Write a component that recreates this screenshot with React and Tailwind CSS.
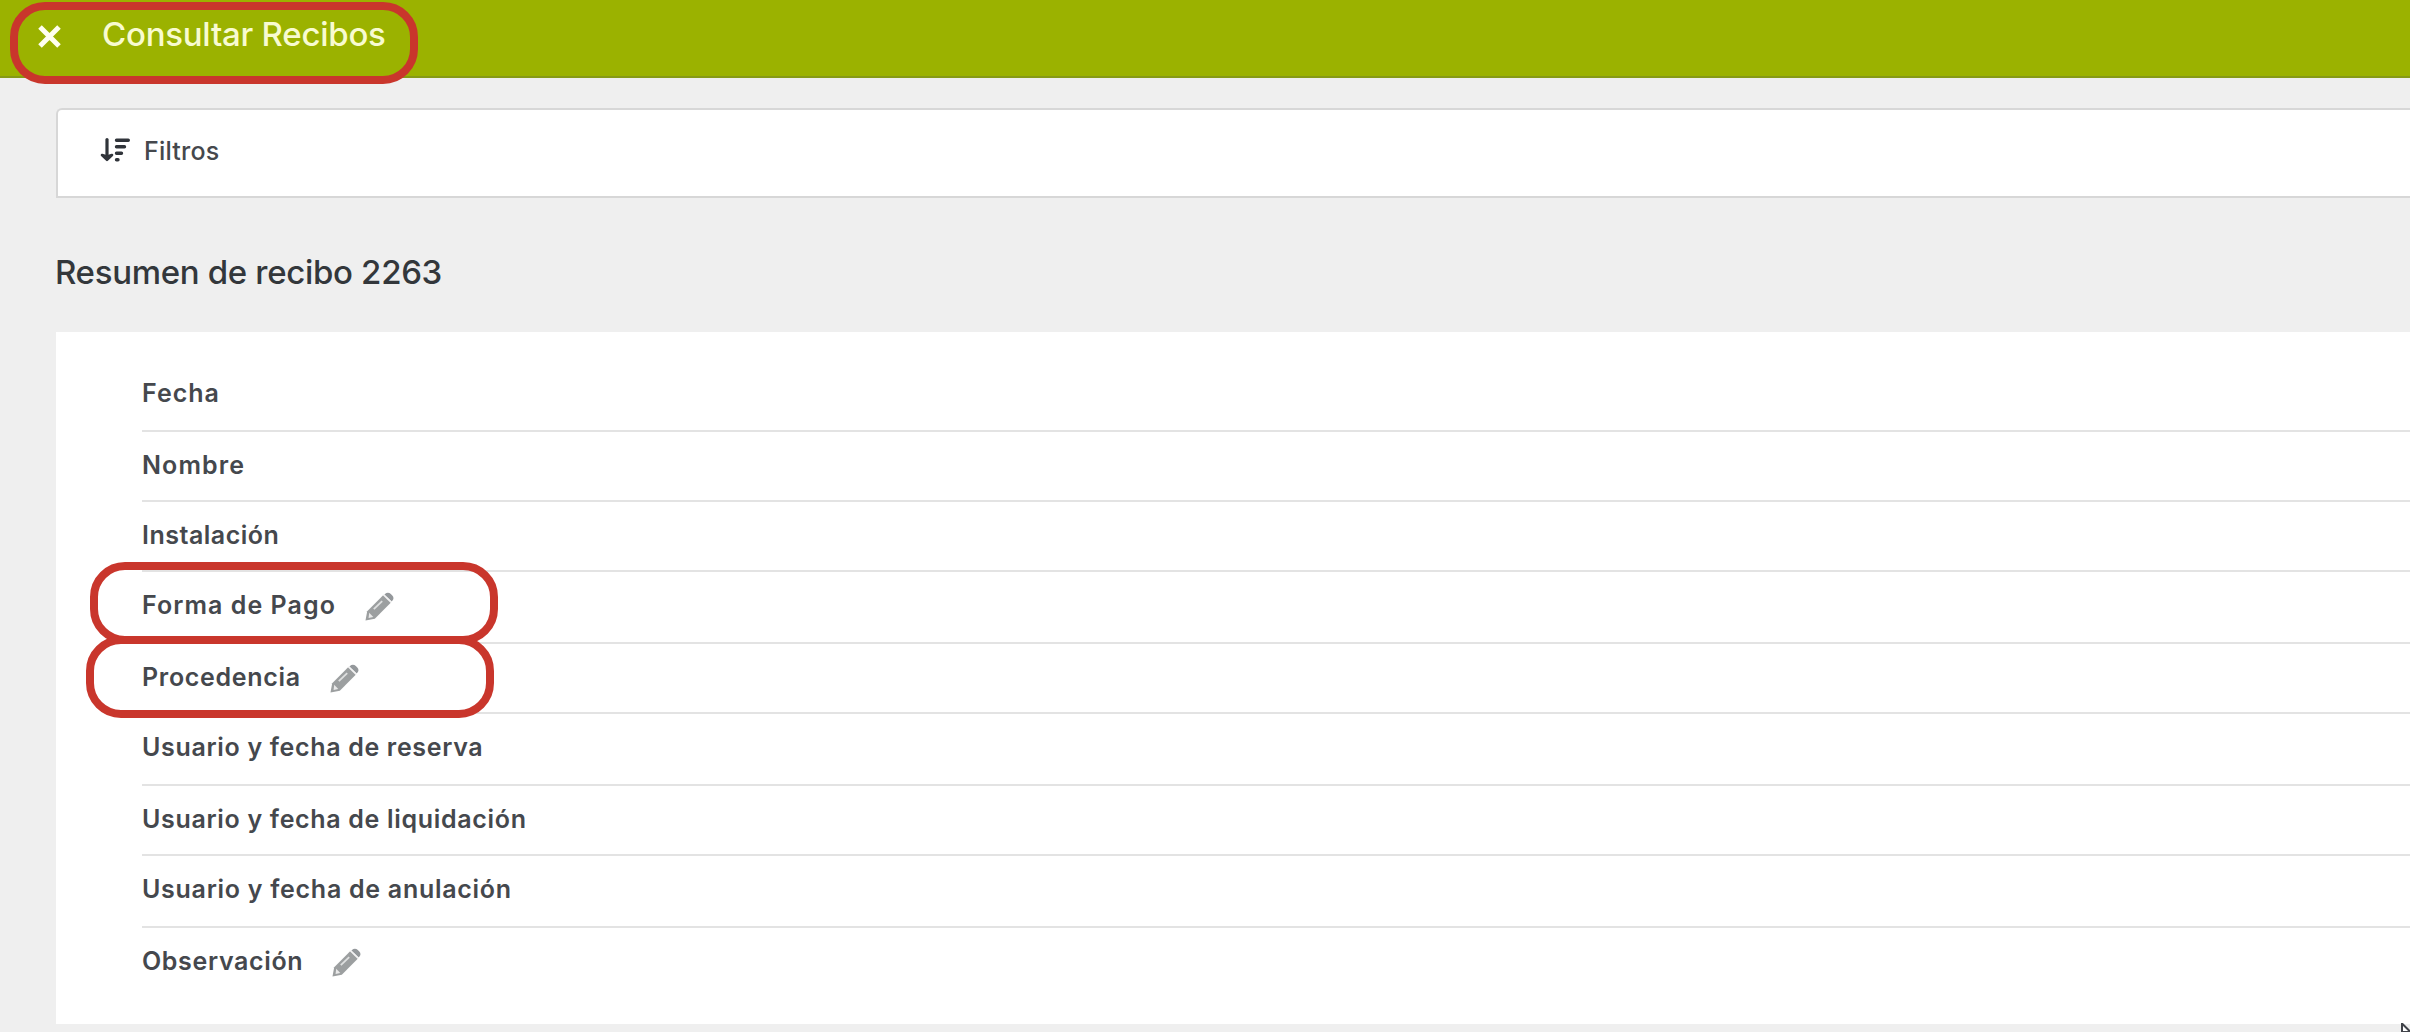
import React from 'react';

const rows = [
  { label: 'Fecha', height: 'h-[72px]', tracking: 'tracking-[1px]' },
  { label: 'Nombre', height: 'h-[70px]', tracking: 'tracking-[1.1px]' },
  { label: 'Instalación', height: 'h-[70px]', tracking: 'tracking-[0.5px]' },
  { label: 'Forma de Pago', height: 'h-[72px]', tracking: 'tracking-[1.05px]', editable: true, ring: '-left-[52px] -top-[10px]' },
  { label: 'Procedencia', height: 'h-[70px]', tracking: 'tracking-[0.7px]', editable: true, ring: '-left-[56px] -top-[8px]' },
  { label: 'Usuario y fecha de reserva', height: 'h-[72px]', tracking: 'tracking-[0.67px]' },
  { label: 'Usuario y fecha de liquidación', height: 'h-[70px]', tracking: 'tracking-[0.68px]' },
  { label: 'Usuario y fecha de anulación', height: 'h-[72px]', tracking: 'tracking-[0.72px]' },
  { label: 'Observación', height: 'h-[70px]', tracking: 'tracking-[0.65px]', editable: true },
];

const Ring = ({ className }) => (
  <span
    className={`absolute z-10 h-[82px] w-[408px] rounded-[35px] border-8 border-[#c9362c] pointer-events-none ${className}`}
  />
);

const CloseIcon = () => (
  <svg className="w-[23px] h-[23px]" viewBox="0 0 23 23" fill="none" stroke="#fffff0" strokeWidth="5">
    <path d="M2 2L21 21M21 2L2 21" />
  </svg>
);

const SortIcon = () => (
  <svg className="w-[30px] h-[26px]" viewBox="0 0 30 26" fill="none" stroke="#30343a" strokeLinecap="round" strokeLinejoin="round">
    <path d="M7 2.5V21" strokeWidth="3.2" />
    <path d="M2 18L7 22.8L12 18L7 19.5Z" fill="#30343a" strokeWidth="2.6" />
    <path d="M16.5 3.3H28.3M16.5 9.8H24.5M16.5 16.3H21.5M16.5 22.8H18" strokeWidth="3.4" />
  </svg>
);

const PencilIcon = () => (
  <svg className="w-[29px] h-[29px]" viewBox="0 0 29 29">
    <path d="M0.5 28.5L2.2 19.2L18.4 3L26 10.6L9.8 26.8Z" fill="#9c9fa0" />
    <path d="M20 1.9C21.6 0.3 24.2 0.3 25.8 1.9L27.3 3.4C28.9 5 28.9 7 27.3 8.8L26.7 9.4L19.4 2.5Z" fill="#94989b" />
    <path d="M18.4 2.8L26.3 10.4" stroke="#f1f1f1" strokeWidth="1.5" />
    <path d="M8.8 17.2L17.2 9.2" stroke="#dfe0e0" strokeWidth="1.8" />
    <path d="M4.2 20.8L8.3 24.9L3.6 25.9Z" fill="#e9e9e9" />
  </svg>
);

const Row = ({ label, height, tracking, editable, ring, last }) => (
  <li className={`relative flex items-start pt-[18px] ${height} ${last ? '' : 'border-b-2 border-[#e3e3e3]'}`}>
    <span className={`text-[25px] leading-[30px] font-semibold whitespace-nowrap text-[#45484d] ${tracking}`}>{label}</span>
    {editable && (
      <button className="ml-[29px] mt-[2px]">
        <PencilIcon />
      </button>
    )}
    {ring && <Ring className={ring} />}
  </li>
);

export default function App() {
  return (
    <div className="relative h-[1032px] w-full overflow-hidden bg-[#efefef] font-['Inter','Liberation_Sans',sans-serif]">
      <header className="relative flex h-[78px] items-start border-b-2 border-[#869a16] bg-[#9bb200] pl-[38px]">
        <button className="mt-[25px]">
          <CloseIcon />
        </button>
        <h1 className="ml-[41px] mt-[14px] text-[33px] leading-[40px] font-medium tracking-[-0.25px] text-[#f8fbd0]">
          Consultar Recibos
        </h1>
        <Ring className="left-[10px] top-[2px]" />
      </header>

      <main className="pl-[56px] pt-[30px]">
        <section className="flex h-[90px] items-start rounded-tl-[6px] border-y-2 border-l-2 border-[#d7d7d7] bg-white pl-[42px] pt-[26px]">
          <span className="mt-px">
            <SortIcon />
          </span>
          <span className="ml-[14px] text-[25px] leading-[30px] font-medium tracking-[0.2px] text-[#45484d]">Filtros</span>
        </section>

        <h2 className="-ml-px mt-[54px] text-[33px] leading-[40px] font-medium tracking-[-0.32px] text-[#33373b]">
          Resumen de recibo 2263
        </h2>

        <ul className="mt-[40px] h-[692px] bg-white pl-[86px] pt-[28px]">
          {rows.map((row, i) => (
            <Row key={row.label} {...row} last={i === rows.length - 1} />
          ))}
        </ul>
      </main>

      <svg className="absolute bottom-0 right-0 w-[9px] h-[9px]" viewBox="0 0 9 9">
        <path d="M1 0.5L9 8.5V9H1Z" fill="#fff" stroke="#404349" strokeWidth="2" />
      </svg>
    </div>
  );
}
